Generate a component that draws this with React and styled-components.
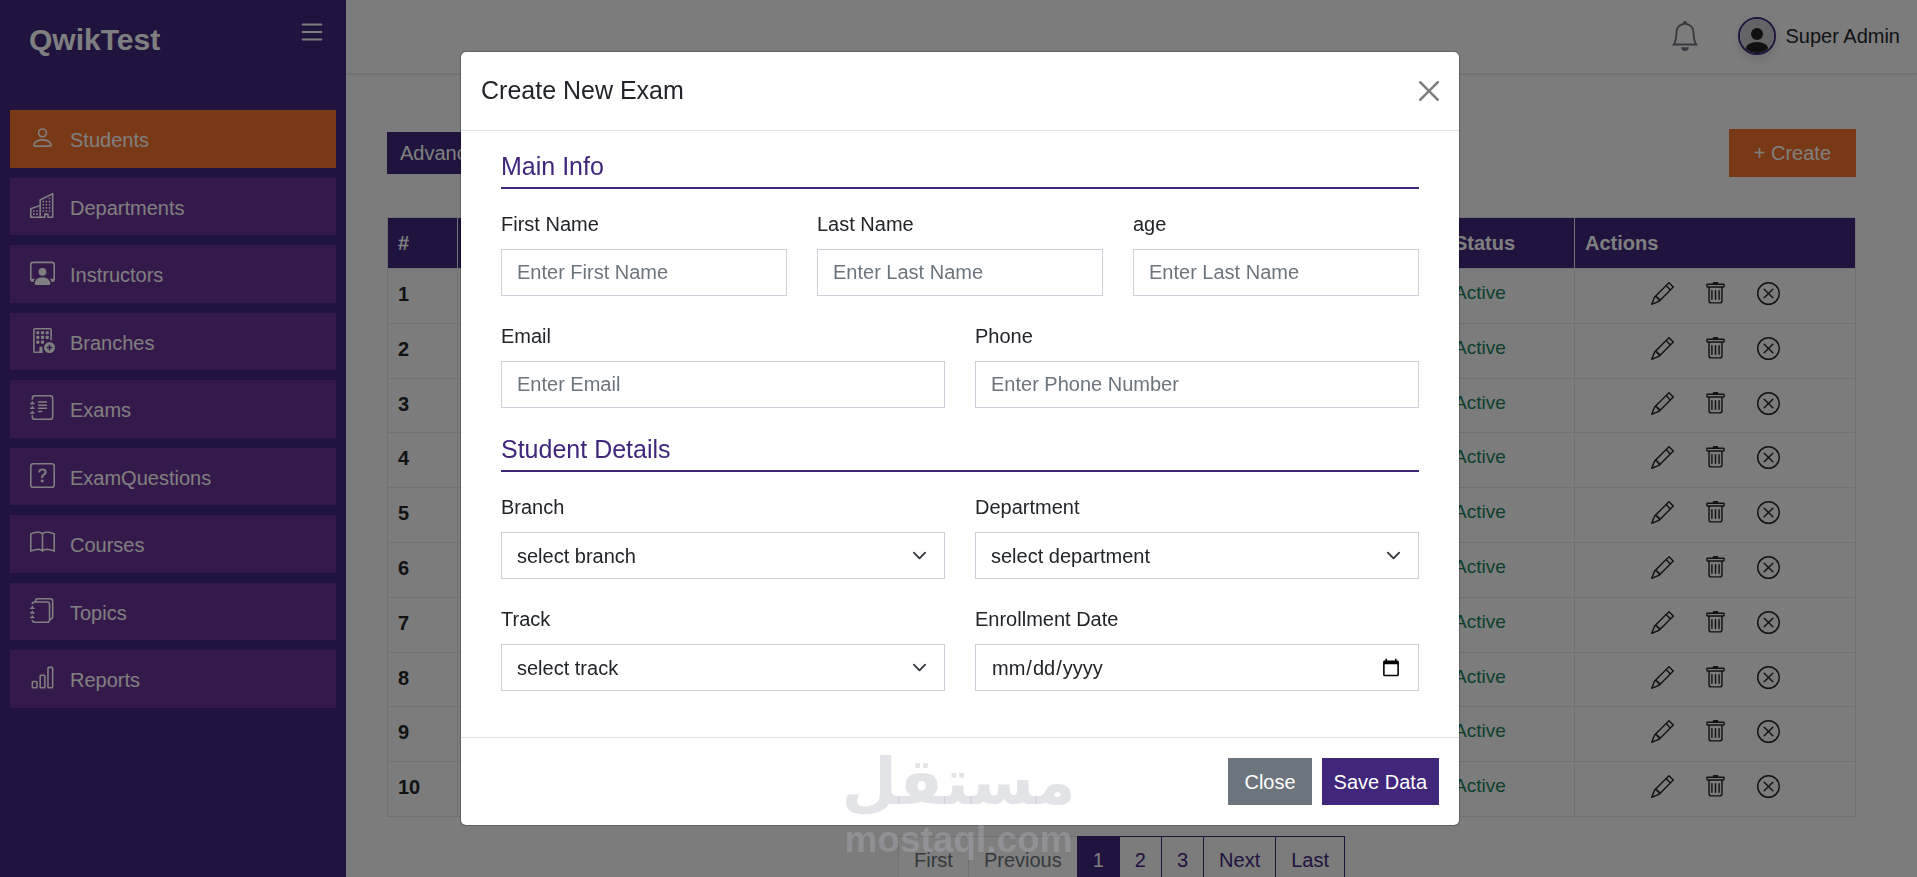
import styled, { createGlobalStyle, css } from 'styled-components';
import {
	BsBarChart,
	BsBell,
	BsBook,
	BsBuildingAdd,
	BsBuildings,
	BsJournalText,
	BsJournals,
	BsList,
	BsPencil,
	BsPerson,
	BsPersonWorkspace,
	BsQuestionSquare,
	BsTrash,
	BsXCircle,
} from 'react-icons/bs';

const colors = {
	primary: '#40277b',
	item: '#693296',
	accent: '#f2722e',
	secondary: '#6c757d',
	text: '#212529',
	border: '#dee2e6',
	inputBorder: '#ced0da',
	success: '#1a7f5c',
	page: '#f8f8f8',
};

const menu = [
	{ label: 'Students', Icon: BsPerson, active: true },
	{ label: 'Departments', Icon: BsBuildings },
	{ label: 'Instructors', Icon: BsPersonWorkspace },
	{ label: 'Branches', Icon: BsBuildingAdd },
	{ label: 'Exams', Icon: BsJournalText },
	{ label: 'ExamQuestions', Icon: BsQuestionSquare },
	{ label: 'Courses', Icon: BsBook },
	{ label: 'Topics', Icon: BsJournals },
	{ label: 'Reports', Icon: BsBarChart },
];

const students = [1, 2, 3, 4, 5, 6, 7, 8, 9, 10];

const pages = [
	{ label: 'First', disabled: true },
	{ label: 'Previous', disabled: true },
	{ label: '1', active: true },
	{ label: '2' },
	{ label: '3' },
	{ label: 'Next' },
	{ label: 'Last' },
];

const GlobalStyle = createGlobalStyle`
	*, *::before, *::after {
		box-sizing: border-box;
	}

	body {
		margin: 0;
		overflow: hidden;
		background: ${colors.page};
		color: ${colors.text};
		font-family: Arial, 'Liberation Sans', sans-serif;
		font-size: 20px;
		line-height: 1.5;
	}

	button, input, select {
		margin: 0;
		font: inherit;
		color: inherit;
	}

	button {
		cursor: pointer;
	}
`;

const Layout = styled.div`
	display: flex;
	height: 100vh;
`;

/* sidebar */

const Sidebar = styled.aside`
	flex: 0 0 346px;
	background: ${colors.primary};
	color: #fff;
`;

const SidebarHeader = styled.div`
	display: flex;
	justify-content: space-between;
	align-items: flex-start;
	height: 110px;
	padding: 17px 19px 0 29px;
`;

const Brand = styled.h1`
	margin: 0;
	padding-top: 3px;
	font-size: 30px;
	line-height: 40px;
`;

const IconButton = styled.button`
	display: flex;
	padding: 0;
	border: 0;
	background: none;
	color: ${({ $color }) => $color || colors.text};
	font-size: ${({ $size }) => $size}px;
`;

const MenuList = styled.ul`
	display: flex;
	flex-direction: column;
	gap: 10px;
	margin: 0;
	padding: 0 10px;
	list-style: none;
`;

const MenuLink = styled.a`
	display: block;
	padding: 10px 20px;
	background: ${({ $active }) => ($active ? colors.accent : colors.item)};
	color: #fff;
	text-decoration: none;
`;

const MenuIcon = styled.span`
	margin-right: 15px;
	font-size: 25px;

	svg {
		vertical-align: -0.125em;
	}
`;

/* page */

const Main = styled.div`
	flex: 1;
	min-width: 0;
`;

const Topbar = styled.header`
	display: flex;
	justify-content: flex-end;
	align-items: center;
	gap: 38px;
	height: 74px;
	padding: 0 17px 2px;
	border-bottom: 1px solid ${colors.border};
	box-shadow: 0 1px 2px rgba(0, 0, 0, 0.1);
`;

const User = styled.div`
	display: flex;
	align-items: center;
	gap: 9px;
`;

const Avatar = styled.svg`
	width: 38px;
	height: 38px;
	border: 2px solid ${colors.primary};
	border-radius: 50%;
	box-shadow: 0 4px 8px rgba(0, 0, 0, 0.12);
`;

const Content = styled.main`
	padding: 55px 61px 0 41px;
`;

const Toolbar = styled.div`
	display: flex;
	justify-content: space-between;
	align-items: center;
	margin-bottom: 40px;
`;

const ToolButton = styled.button`
	padding: ${({ $accent }) => ($accent ? '9px 25px' : '6px 13px')};
	border: 0;
	background: ${({ $accent }) => ($accent ? colors.accent : colors.primary)};
	color: #fff;
`;

const Table = styled.table`
	width: 100%;
	table-layout: fixed;
	border-collapse: collapse;

	th,
	td {
		padding: 10px;
		border: 1px solid ${colors.border};
		text-align: left;
		vertical-align: top;
	}

	thead th {
		background: ${colors.primary};
		color: #fff;
	}
`;

const Status = styled.div`
	color: ${colors.success};
	font-size: 19px;
	line-height: 27px;
`;

const Actions = styled.div`
	display: flex;
	justify-content: center;
	align-items: flex-start;
	gap: 30px;
	min-height: 1lh;
	padding-top: 3px;
	line-height: 1.69;
`;

const Pagination = styled.nav`
	display: flex;
	justify-content: center;
	margin-top: 19px;
`;

const PageLink = styled.a`
	padding: 8px 15px;
	border: 1px solid ${colors.primary};
	color: ${colors.primary};
	text-decoration: none;

	& + & {
		margin-left: -1px;
	}

	${({ $disabled }) =>
		$disabled &&
		css`
			border-color: ${colors.border};
			background: #fff;
			color: ${colors.secondary};
		`}

	${({ $active }) =>
		$active &&
		css`
			background: ${colors.primary};
			color: #fff;
		`}
`;

/* modal */

const Backdrop = styled.div`
	position: fixed;
	inset: 0;
	display: flex;
	justify-content: center;
	align-items: center;
	padding-left: 3px;
	background: rgba(0, 0, 0, 0.5);
`;

const Modal = styled.form`
	width: 100%;
	max-width: 1000px;
	border: 1px solid rgba(0, 0, 0, 0.2);
	border-radius: 6px;
	background: #fff;
	background-clip: padding-box;
`;

const ModalHeader = styled.div`
	display: flex;
	justify-content: space-between;
	align-items: center;
	padding: 20px;
	border-bottom: 1px solid ${colors.border};
`;

const ModalTitle = styled.h2`
	margin: 0;
	padding-bottom: 2px;
	font-size: 25px;
	font-weight: 400;
	line-height: 36px;
`;

const CloseButton = styled.button`
	display: flex;
	padding: 0;
	border: 0;
	background: none;
	opacity: 0.5;

	svg {
		width: 20px;
		height: 20px;
	}
`;

const ModalBody = styled.div`
	padding: 20px 40px;
`;

const Section = styled.section`
	margin-bottom: 26px;
`;

const SectionTitle = styled.h3`
	margin: 0 0 20px;
	padding-bottom: 6px;
	border-bottom: 2px solid ${colors.primary};
	color: ${colors.primary};
	font-size: 25px;
	font-weight: 400;
	line-height: 30px;
`;

const Row = styled.div`
	display: grid;
	grid-template-columns: repeat(${({ $columns }) => $columns}, 1fr);
	gap: 30px;

	& + & {
		margin-top: 25px;
	}
`;

const FieldLabel = styled.label`
	display: block;
	margin-bottom: 10px;
`;

const control = css`
	display: block;
	width: 100%;
	height: 47px;
	padding: 0 15px;
	border: 1px solid ${colors.inputBorder};
	border-radius: 0;
	background: #fff;
`;

const Input = styled.input`
	${control}

	&::placeholder {
		color: ${colors.secondary};
		opacity: 1;
	}
`;

const Select = styled.select`
	${control}
	appearance: none;
`;

const SelectWrap = styled.div`
	position: relative;

	svg {
		position: absolute;
		top: 16px;
		right: 18px;
		width: 15px;
		height: 15px;
		pointer-events: none;
	}
`;

const ModalFooter = styled.div`
	display: flex;
	justify-content: flex-end;
	gap: 10px;
	padding: 20px;
	border-top: 1px solid ${colors.border};
`;

const ModalButton = styled.button`
	height: 47px;
	padding: 0 ${({ $primary }) => ($primary ? 12 : 16)}px;
	border: 0;
	background: ${({ $primary }) => ($primary ? colors.primary : colors.secondary)};
	color: #fff;
`;

const Watermark = styled.div`
	position: fixed;
	right: 0;
	bottom: 15px;
	left: 0;
	display: flex;
	flex-direction: column;
	align-items: center;
	color: rgba(178, 180, 188, 0.36);
	font-weight: 700;
	pointer-events: none;
`;

const WatermarkName = styled.span`
	font-family: 'DejaVu Sans', sans-serif;
	font-size: 64px;
	line-height: 72px;
`;

const WatermarkDomain = styled.span`
	font-size: 37px;
	line-height: 44px;
`;

const TextField = ({ id, label, type = 'text', placeholder }) => (
	<div>
		<FieldLabel htmlFor={id}>{label}</FieldLabel>
		<Input id={id} name={id} type={type} placeholder={placeholder} />
	</div>
);

const SelectField = ({ id, label, placeholder }) => (
	<div>
		<FieldLabel htmlFor={id}>{label}</FieldLabel>
		<SelectWrap>
			<Select id={id} name={id}>
				<option>{placeholder}</option>
			</Select>
			<svg viewBox="0 0 16 16" fill="none" stroke="#343a40" strokeWidth="2" strokeLinecap="round" strokeLinejoin="round">
				<path d="m2 5 6 6 6-6" />
			</svg>
		</SelectWrap>
	</div>
);

const SideMenu = () => (
	<Sidebar>
		<SidebarHeader>
			<Brand>QwikTest</Brand>
			<IconButton type="button" aria-label="Toggle menu" $size={30} $color="#fff">
				<BsList />
			</IconButton>
		</SidebarHeader>
		<MenuList>
			{menu.map(({ label, Icon, active }) => (
				<li key={label}>
					<MenuLink href="#" $active={active}>
						<MenuIcon>
							<Icon />
						</MenuIcon>
						{label}
					</MenuLink>
				</li>
			))}
		</MenuList>
	</Sidebar>
);

const StudentsTable = () => (
	<Table>
		<colgroup>
			<col width="70" />
			<col />
			<col />
			<col />
			<col />
			<col width="131" />
			<col width="281" />
		</colgroup>
		<thead>
			<tr>
				<th>#</th>
				<th />
				<th />
				<th />
				<th />
				<th>Status</th>
				<th>Actions</th>
			</tr>
		</thead>
		<tbody>
			{students.map((id) => (
				<tr key={id}>
					<th scope="row">{id}</th>
					<td />
					<td />
					<td />
					<td />
					<td>
						<Status>Active</Status>
					</td>
					<td>
						<Actions>
							<IconButton type="button" aria-label="Edit" $size={23}>
								<BsPencil />
							</IconButton>
							<IconButton type="button" aria-label="Delete" $size={23}>
								<BsTrash />
							</IconButton>
							<IconButton type="button" aria-label="Deactivate" $size={23}>
								<BsXCircle />
							</IconButton>
						</Actions>
					</td>
				</tr>
			))}
		</tbody>
	</Table>
);

const CreateModal = () => (
	<Backdrop>
		<Modal role="dialog" aria-labelledby="modal-title">
			<ModalHeader>
				<ModalTitle id="modal-title">Create New Exam</ModalTitle>
				<CloseButton type="button" aria-label="Close">
					<svg viewBox="0 0 16 16">
						<path d="M.293.293a1 1 0 0 1 1.414 0L8 6.586 14.293.293a1 1 0 1 1 1.414 1.414L9.414 8l6.293 6.293a1 1 0 0 1-1.414 1.414L8 9.414l-6.293 6.293a1 1 0 0 1-1.414-1.414L6.586 8 .293 1.707a1 1 0 0 1 0-1.414z" />
					</svg>
				</CloseButton>
			</ModalHeader>
			<ModalBody>
				<Section>
					<SectionTitle>Main Info</SectionTitle>
					<Row $columns={3}>
						<TextField id="firstName" label="First Name" placeholder="Enter First Name" />
						<TextField id="lastName" label="Last Name" placeholder="Enter Last Name" />
						<TextField id="age" label="age" placeholder="Enter Last Name" />
					</Row>
					<Row $columns={2}>
						<TextField id="email" label="Email" type="email" placeholder="Enter Email" />
						<TextField id="phone" label="Phone" type="tel" placeholder="Enter Phone Number" />
					</Row>
				</Section>
				<Section>
					<SectionTitle>Student Details</SectionTitle>
					<Row $columns={2}>
						<SelectField id="branch" label="Branch" placeholder="select branch" />
						<SelectField id="department" label="Department" placeholder="select department" />
					</Row>
					<Row $columns={2}>
						<SelectField id="track" label="Track" placeholder="select track" />
						<TextField id="enrollmentDate" label="Enrollment Date" type="date" />
					</Row>
				</Section>
			</ModalBody>
			<ModalFooter>
				<ModalButton type="button">Close</ModalButton>
				<ModalButton type="submit" $primary>
					Save Data
				</ModalButton>
			</ModalFooter>
		</Modal>
	</Backdrop>
);

const App = () => (
	<>
		<GlobalStyle />
		<Layout>
			<SideMenu />
			<Main>
				<Topbar>
					<IconButton type="button" aria-label="Notifications" $size={30} $color={colors.secondary}>
						<BsBell />
					</IconButton>
					<User>
						<Avatar viewBox="0 0 34 34">
							<rect width="34" height="34" fill="#c8c8cc" />
							<circle cx="17" cy="15" r="6" fill="#212121" />
							<ellipse cx="17" cy="29" rx="11" ry="6" fill="#212121" />
						</Avatar>
						<span>Super Admin</span>
					</User>
				</Topbar>
				<Content>
					<Toolbar>
						<ToolButton type="button">Advanced Search</ToolButton>
						<ToolButton type="button" $accent>
							+ Create
						</ToolButton>
					</Toolbar>
					<StudentsTable />
					<Pagination>
						{pages.map(({ label, active, disabled }) => (
							<PageLink key={label} href="#" $active={active} $disabled={disabled}>
								{label}
							</PageLink>
						))}
					</Pagination>
				</Content>
			</Main>
		</Layout>
		<CreateModal />
		<Watermark>
			<WatermarkName lang="ar">مستقل</WatermarkName>
			<WatermarkDomain>mostaql.com</WatermarkDomain>
		</Watermark>
	</>
);

export default App;
